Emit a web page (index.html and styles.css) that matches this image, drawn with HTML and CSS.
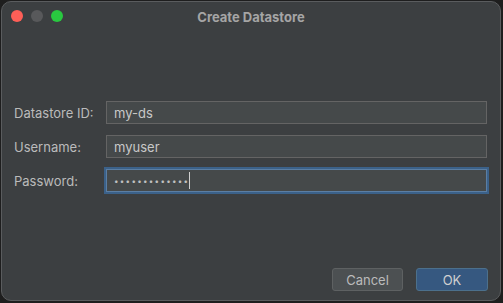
FILE: index.html
```html
<!DOCTYPE html>
<html>
<head>
    <meta charset="UTF-8">
    <title>Create Datastore</title>
    <link rel="stylesheet" href="styles.css">
</head>
<body>
    <div class="window">
        <div class="titlebar">
            <div class="lights">
                <span class="light red"></span>
                <span class="light gray"></span>
                <span class="light green"></span>
            </div>
            <div class="title">Create Datastore</div>
        </div>

        <div class="form">
            <label class="label">Datastore ID:</label>
            <div class="field">my-ds</div>

            <label class="label">Username:</label>
            <div class="field">myuser</div>

            <label class="label">Password:</label>
            <div class="field focused"><span class="dots">•••••••••••••</span><span class="caret"></span></div>
        </div>

        <div class="footer">
            <button class="btn">Cancel</button>
            <button class="btn primary">OK</button>
        </div>
    </div>
</body>
</html>
```

FILE: styles.css
```css
html, body {
    margin: 0;
    padding: 0;
    background: #1e1e1e;
    width: 503px;
    height: 303px;
    overflow: hidden;
}

body {
    padding: 1px;
    box-sizing: border-box;
    font-family: Inter, "Noto Sans", sans-serif;
    font-size: 13px;
    color: #bbbbbb;
}

.window {
    width: 500px;
    height: 300px;
    box-sizing: border-box;
    background: #3c3f41;
    border: 1px solid #5a5c5e;
    border-radius: 10px;
    display: flex;
    flex-direction: column;
}

/* Заголовок окна */
.titlebar {
    position: relative;
    height: 30px;
    display: flex;
    align-items: center;
    justify-content: center;
}

.lights {
    position: absolute;
    left: 9px;
    top: 8px;
    display: flex;
    gap: 8px;
}

.light {
    width: 12px;
    height: 12px;
    border-radius: 50%;
    display: block;
}

.red { background: #fe5f57; }
.gray { background: #58595b; }
.green { background: #29c840; }

.title {
    font-weight: 700;
    color: #a5a5a5;
    margin-top: 0px;
}

/* Форма */
.form {
    display: grid;
    grid-template-columns: 92px 381px;
    row-gap: 11px;
    padding: 69px 0 0 12px;
    align-items: center;
}

.label {
    color: #bbbbbb;
}

.field {
    height: 23px;
    box-sizing: border-box;
    background: #45494a;
    border: 1px solid #646464;
    padding: 0 7px;
    display: flex;
    align-items: center;
    color: #c8c8c8;
}

.field.focused {
    border-color: #5b7ea3;
    box-shadow: 0 0 0 2px #3b6189;
}

.dots {
    font-size: 8px;
    letter-spacing: 1.3px;
    color: #c0c0c0;
}

.caret {
    width: 1px;
    height: 17px;
    background: #d0d0d0;
    margin-left: 0px;
}

/* Кнопки */
.footer {
    margin-top: auto;
    display: flex;
    justify-content: flex-end;
    gap: 13px;
    padding: 0 12px 9px 0;
}

.btn {
    height: 23px;
    width: 71px;
    box-sizing: border-box;
    font-family: inherit;
    font-size: 13px;
    color: #bbbbbb;
    background: #4c5052;
    border: 1px solid #5e6162;
    border-radius: 3px;
    padding: 0;
}

.btn.primary {
    width: 72px;
    background: #365880;
    border-color: #4c708c;
    color: #d0d0d0;
}
```
